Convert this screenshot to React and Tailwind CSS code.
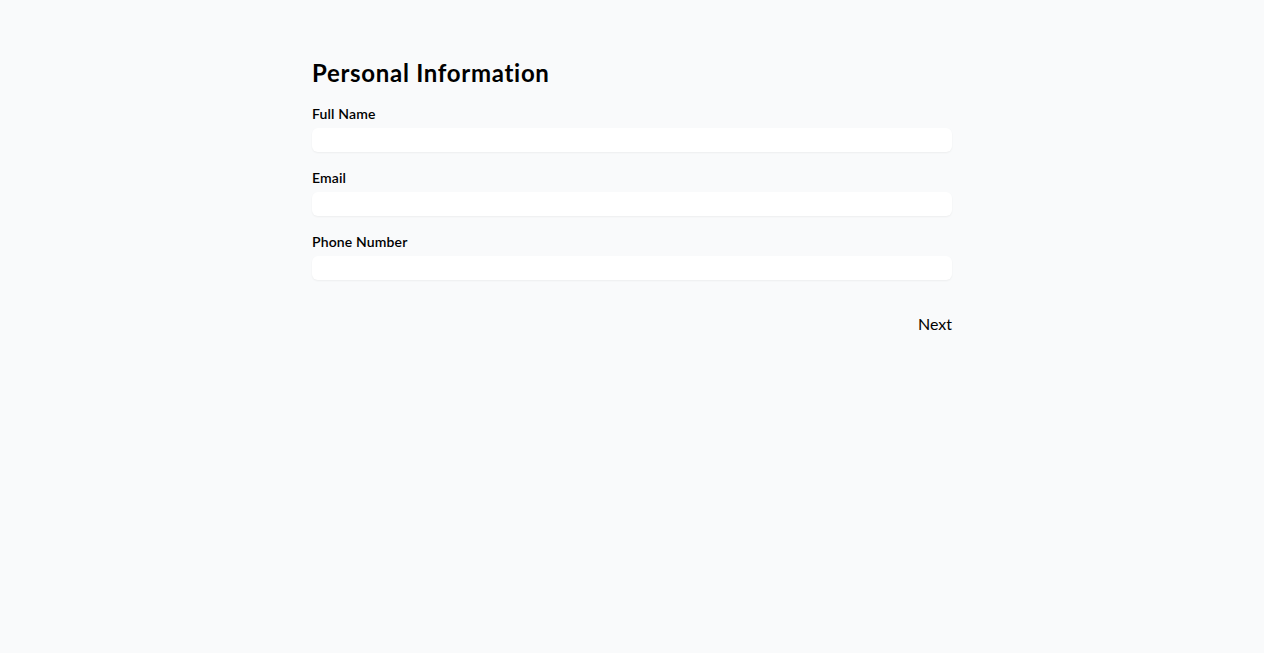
import React, { useState } from 'react'

const fields = [
  { id: 'fullName', label: 'Full Name', type: 'text' },
  { id: 'email', label: 'Email', type: 'email' },
  { id: 'phone', label: 'Phone Number', type: 'tel' },
]

const App = () => {
  const [values, setValues] = useState({ fullName: '', email: '', phone: '' })

  return (
    <div className="min-h-screen bg-gray-50 font-['Lato',sans-serif] text-black">
      <div className="max-w-[640px] mx-auto pt-[57px]">
        <h2 className="text-2xl font-bold leading-8 tracking-[0.7px] mb-[15px]">Personal Information</h2>

        <div className="space-y-4">
          {fields.map((f) => (
            <div key={f.id}>
              <label htmlFor={f.id} className="block text-sm font-semibold leading-5 tracking-[0.15px] mb-1">
                {f.label}
              </label>
              <input
                id={f.id}
                type={f.type}
                value={values[f.id]}
                onChange={(e) => setValues({ ...values, [f.id]: e.target.value })}
                className="block w-full h-6 rounded-md bg-white shadow-xs outline-none px-2 text-sm"
              />
            </div>
          ))}
        </div>

        <div className="flex justify-end mt-8">
          <button className="text-base leading-6">Next</button>
        </div>
      </div>
    </div>
  )
}

export default App
